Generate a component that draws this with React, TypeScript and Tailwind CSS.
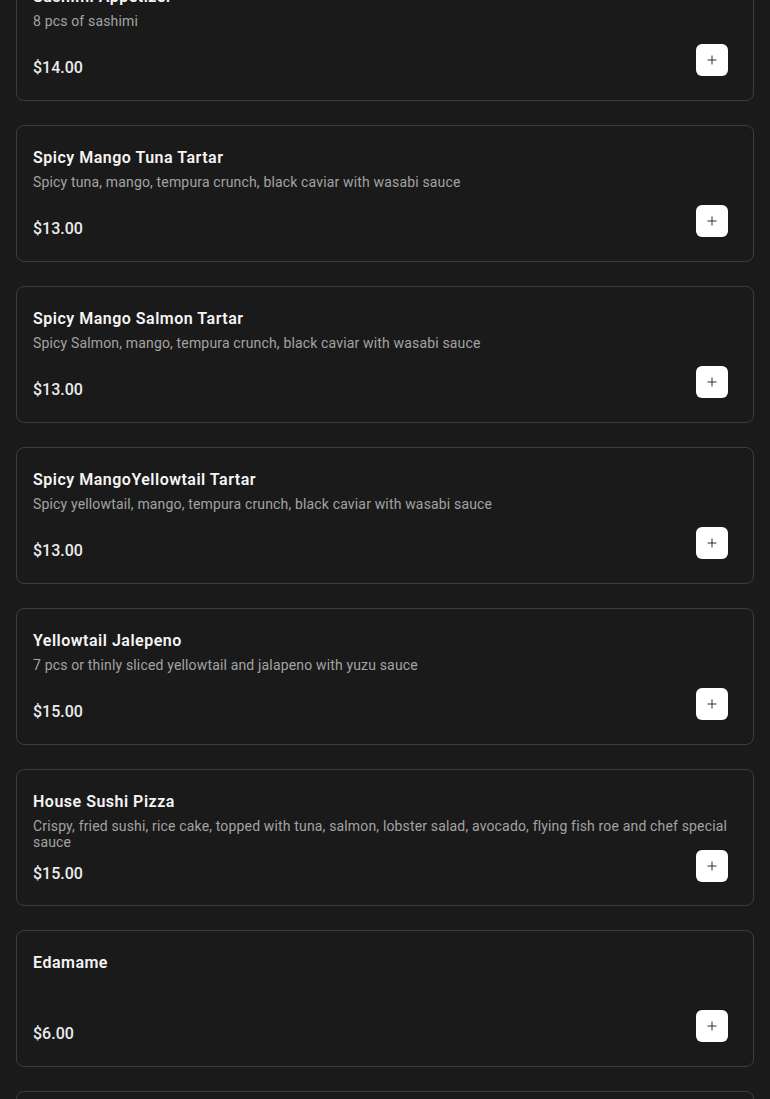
import { Plus } from 'lucide-react';

type MenuItem = { name: string; description?: string; price: number };

const ITEMS: MenuItem[] = [
  { name: 'Sashimi Appetizer', description: '8 pcs of sashimi', price: 14 },
  {
    name: 'Spicy Mango Tuna Tartar',
    description: 'Spicy tuna, mango, tempura crunch, black caviar with wasabi sauce',
    price: 13,
  },
  {
    name: 'Spicy Mango Salmon Tartar',
    description: 'Spicy Salmon, mango, tempura crunch, black caviar with wasabi sauce',
    price: 13,
  },
  {
    name: 'Spicy MangoYellowtail Tartar',
    description: 'Spicy yellowtail, mango, tempura crunch, black caviar with wasabi sauce',
    price: 13,
  },
  {
    name: 'Yellowtail Jalepeno',
    description: '7 pcs or thinly sliced yellowtail and jalapeno with yuzu sauce',
    price: 15,
  },
  {
    name: 'House Sushi Pizza',
    description:
      'Crispy, fried sushi, rice cake, topped with tuna, salmon, lobster salad, avocado, flying fish roe and chef special sauce',
    price: 15,
  },
  { name: 'Edamame', price: 6 },
  { name: 'Miso Soup', description: 'Tofu, seaweed and scallion', price: 4 },
];

function MenuCard({ item }: { item: MenuItem }) {
  return (
    <div className="flex h-[137px] flex-col justify-between rounded-lg border border-[#3d3d3d] bg-[#1a1a1a] pb-5 pl-4 pr-[25px] pt-5">
      <div>
        <h3 className="text-base font-semibold leading-6 tracking-[0.5px] text-[#f5f5f5]">{item.name}</h3>
        {item.description ? (
          <p className="-mr-2 mt-1 text-sm leading-4 tracking-[0.16px] text-[#a3a3a3]">{item.description}</p>
        ) : null}
      </div>
      <div className="flex items-end justify-between">
        <span className="text-base font-medium leading-6 text-[#ececec]">${item.price.toFixed(2)}</span>
        <button
          type="button"
          className="mb-1 flex h-8 w-8 items-center justify-center rounded-md bg-white text-[#2a2a2a]"
          aria-label={`Add ${item.name}`}
        >
          <Plus size={14} strokeWidth={1.7} />
        </button>
      </div>
    </div>
  );
}

export default function App() {
  return (
    <div
      className="min-h-screen overflow-hidden bg-[#1a1a1a] px-4"
      style={{ fontFamily: 'Roboto, "Noto Sans", sans-serif' }}
    >
      <div className="-mt-[36px] flex flex-col gap-6 pb-6">
        {ITEMS.map((item) => (
          <MenuCard key={item.name} item={item} />
        ))}
      </div>
    </div>
  );
}
